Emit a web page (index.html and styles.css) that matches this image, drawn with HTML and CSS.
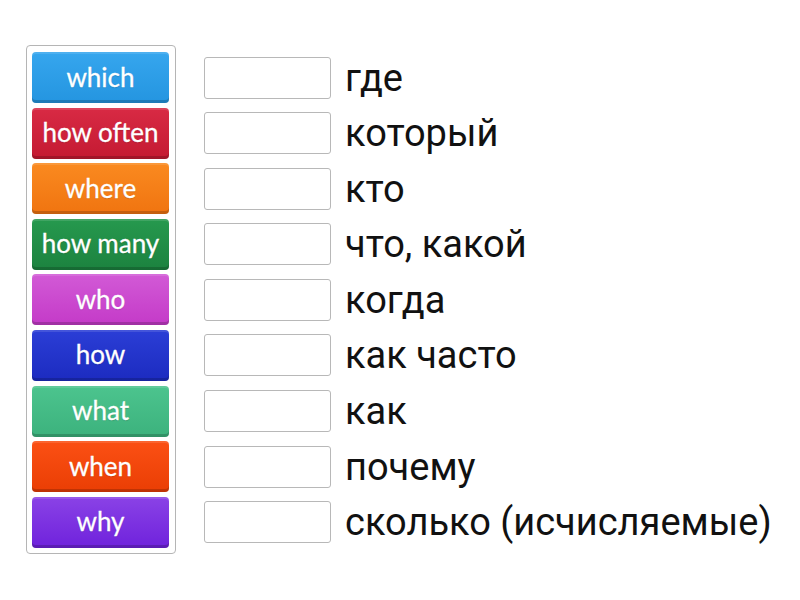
FILE: index.html
```html
<!DOCTYPE html>
<html>
<head>
<meta charset="utf-8">
<link rel="stylesheet" href="styles.css">
</head>
<body>
<div class="game">
  <div class="bank">
    <div class="tile c1">which</div>
    <div class="tile c2">how often</div>
    <div class="tile c3">where</div>
    <div class="tile c4">how many</div>
    <div class="tile c5">who</div>
    <div class="tile c6">how</div>
    <div class="tile c7">what</div>
    <div class="tile c8">when</div>
    <div class="tile c9">why</div>
  </div>
  <div class="rows">
    <div class="row"><div class="slot"></div><span class="label">где</span></div>
    <div class="row"><div class="slot"></div><span class="label">который</span></div>
    <div class="row"><div class="slot"></div><span class="label">кто</span></div>
    <div class="row"><div class="slot"></div><span class="label">что, какой</span></div>
    <div class="row"><div class="slot"></div><span class="label">когда</span></div>
    <div class="row"><div class="slot"></div><span class="label">как часто</span></div>
    <div class="row"><div class="slot"></div><span class="label">как</span></div>
    <div class="row"><div class="slot"></div><span class="label">почему</span></div>
    <div class="row"><div class="slot"></div><span class="label">сколько (исчисляемые)</span></div>
  </div>
</div>
</body>
</html>
```
FILE: styles.css
```css
html, body {
  margin: 0;
  background: #fff;
}
.game {
  display: flex;
  align-items: flex-start;
  padding: 45px 0 0 26px;
}
.bank {
  width: 137px;
  border: 1px solid #b5b5b5;
  border-radius: 4px;
  padding: 6px 6px 5px 5px;
  display: flex;
  flex-direction: column;
  gap: 4.6px;
}
.tile {
  height: 51px;
  border-radius: 4px;
  display: flex;
  align-items: center;
  justify-content: center;
  color: #fff;
  font-family: Lato, "Open Sans", sans-serif;
  font-size: 26px;
  box-sizing: border-box;
  padding-bottom: 2px;
  box-shadow: inset 0 -3px 0 rgba(0,0,0,0.18), inset 0 2px 0 rgba(255,255,255,0.12);
  text-shadow: 0 1px 1px rgba(0,0,0,0.15);
  -webkit-text-stroke: 0.3px #fff;
  white-space: nowrap;
}
.c1 { background: linear-gradient(#36a6ee, #2495e0); }
.c2 { background: linear-gradient(#d82a44, #c41a32); }
.c3 { background: linear-gradient(#fa8a20, #f07410); }
.c4 { background: linear-gradient(#26994e, #1c823f); }
.c5 { background: linear-gradient(#d25ad6, #c43ac8); }
.c6 { background: linear-gradient(#2b3ed6, #1c2bc0); }
.c7 { background: linear-gradient(#4cc48e, #3cb27d); }
.c8 { background: linear-gradient(#fb5014, #ea3e04); }
.c9 { background: linear-gradient(#8a42e6, #6f22dc); }
.rows {
  margin: 7px 0 0 28px;
  display: flex;
  flex-direction: column;
  gap: 4.6px;
}
.row {
  height: 51px;
  display: flex;
  align-items: center;
}
.slot {
  width: 127px;
  height: 42px;
  box-sizing: border-box;
  border: 1px solid #b8b8b8;
  border-radius: 3px;
  background: #fff;
}
.label {
  margin-left: 14px;
  font-family: Roboto, "Liberation Sans", sans-serif;
  font-size: 38px;
  color: #111;
  white-space: nowrap;
}
```
